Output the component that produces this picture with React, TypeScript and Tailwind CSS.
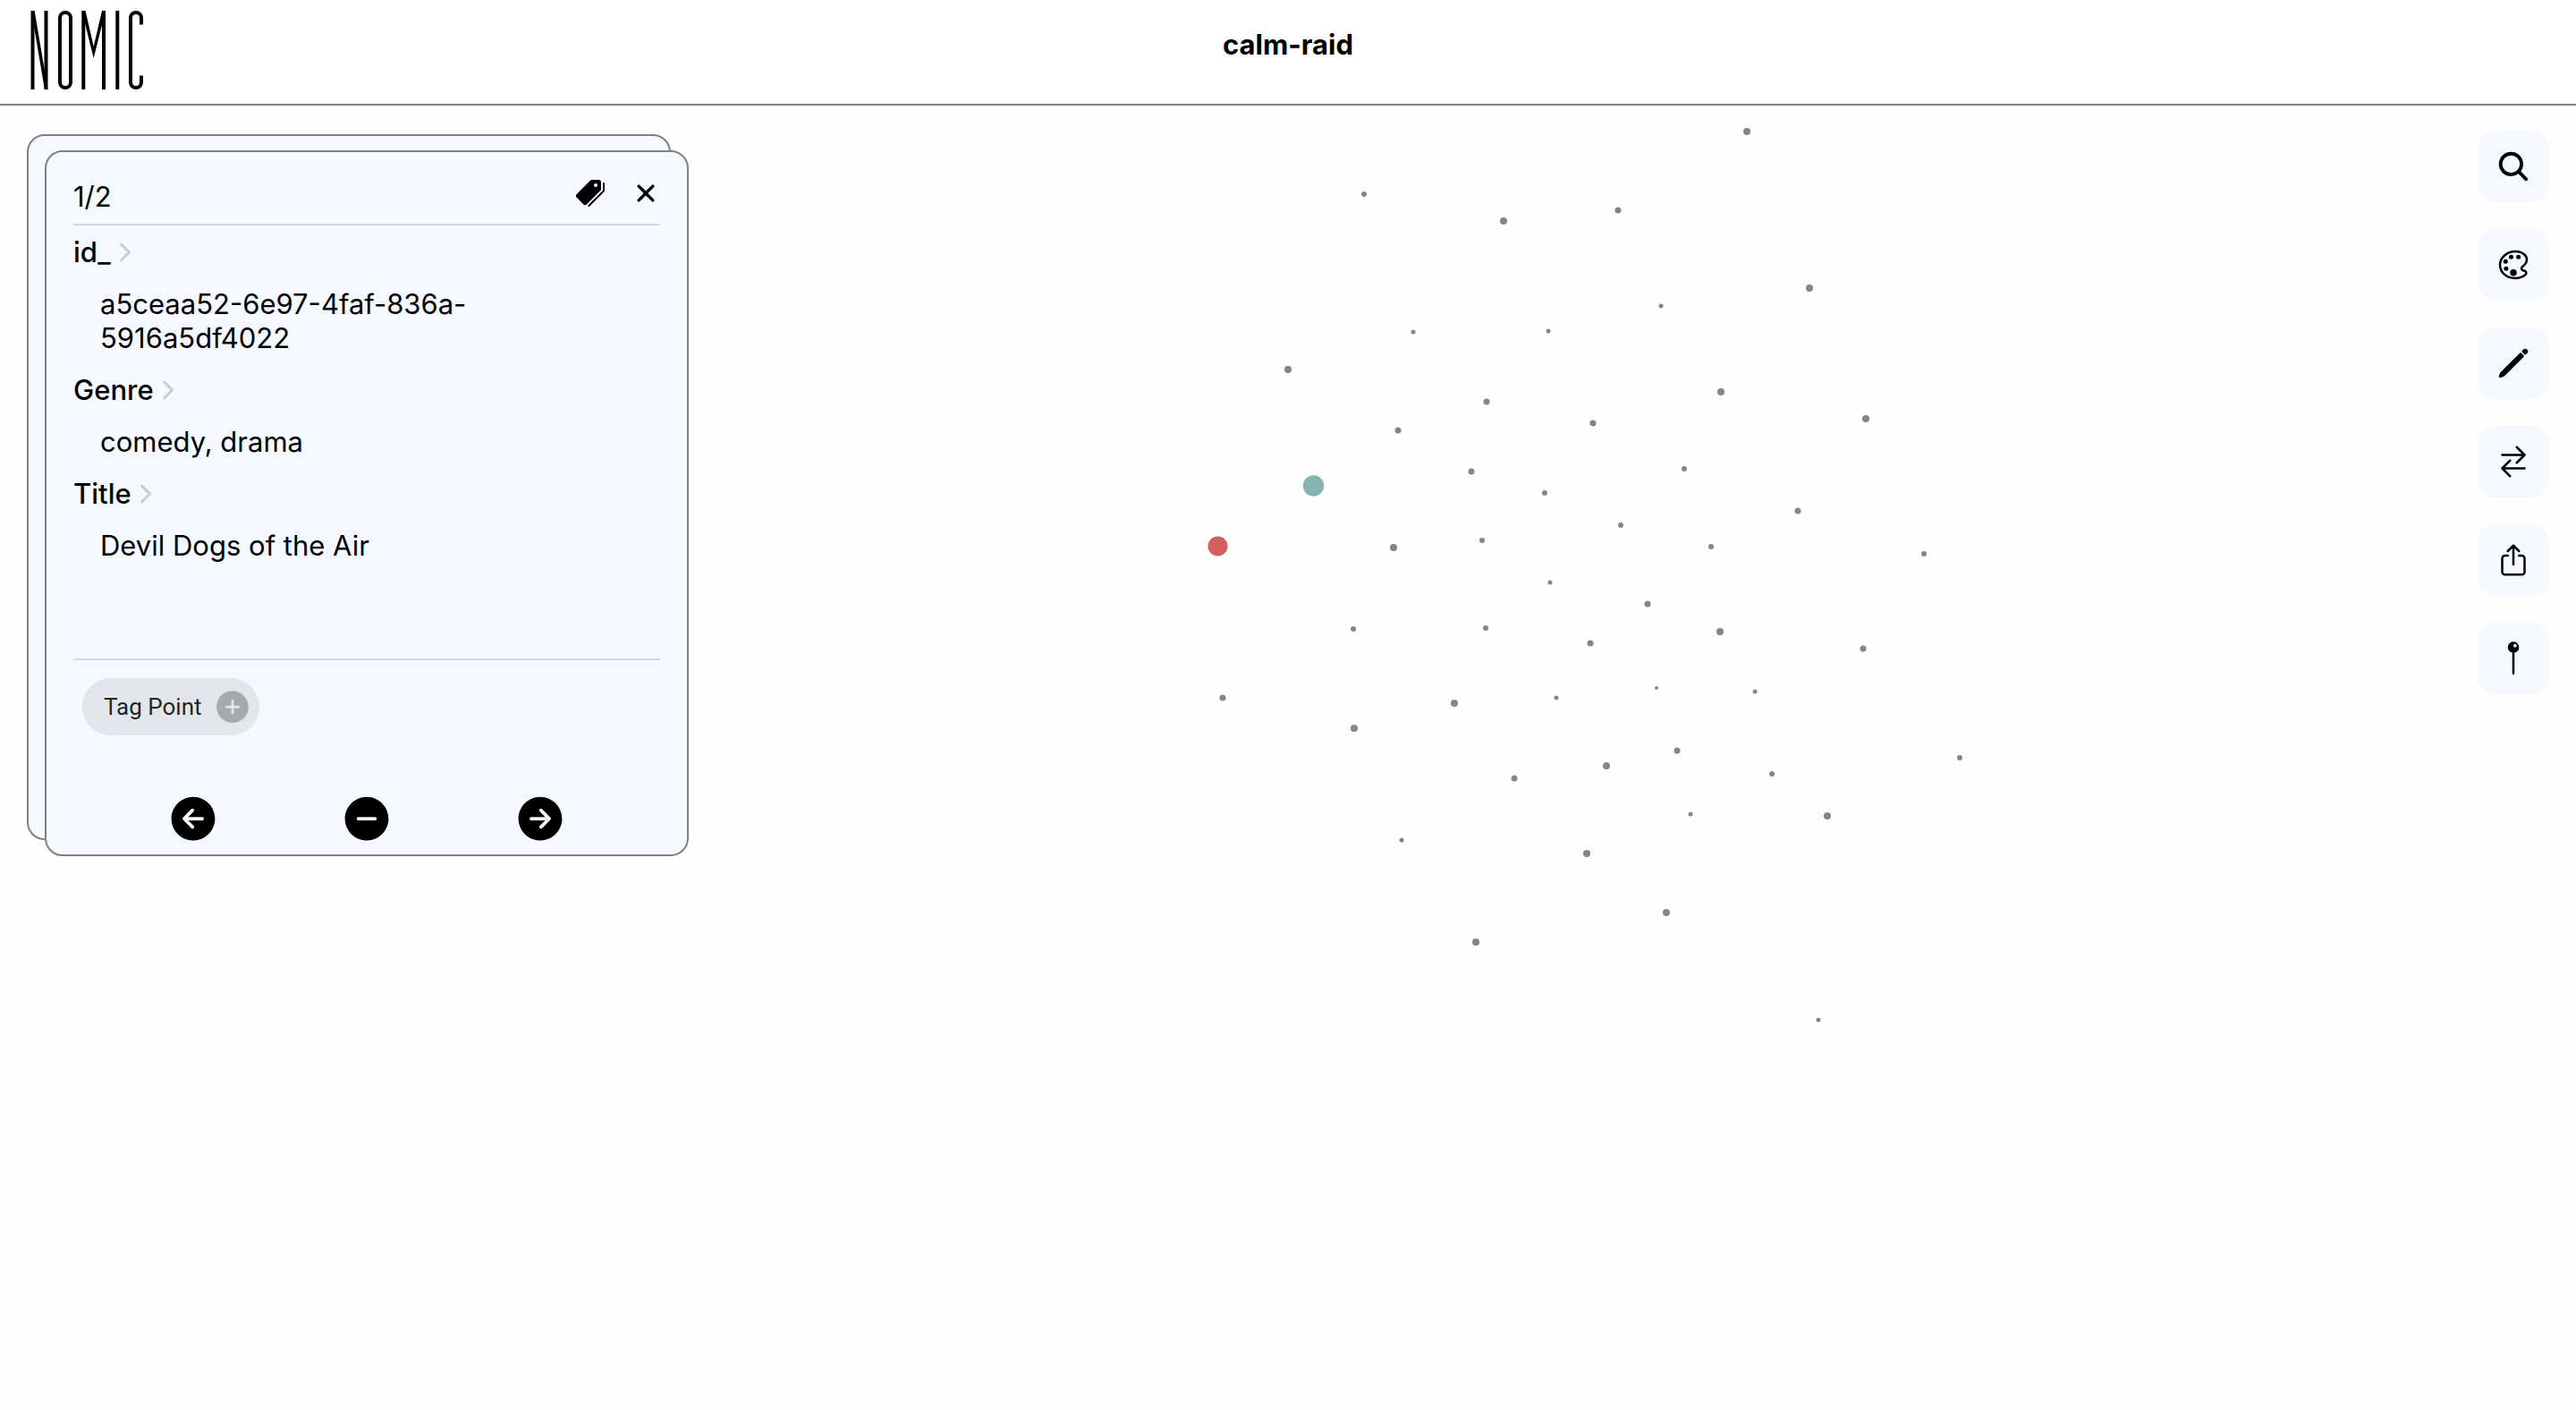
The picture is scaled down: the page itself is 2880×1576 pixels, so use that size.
import type { ReactNode } from "react";
import {
  IoAddCircle,
  IoArrowBackCircle,
  IoArrowForwardCircle,
  IoChevronForward,
  IoClose,
  IoColorPaletteOutline,
  IoPencil,
  IoPin,
  IoPricetags,
  IoRemoveCircle,
  IoSearch,
  IoShareOutline,
  IoSwapHorizontal,
} from "react-icons/io5";

type Point = [x: number, y: number, r: number];

const POINTS: Point[] = [
  [1525, 99, 3], [1681, 129, 4], [1580, 253, 2.5], [1731, 252, 2.5], [1440, 295, 4],
  [1662, 331, 3.5], [1563, 363, 3.5], [1781, 355, 3.5], [1645, 409, 3.5], [1727, 433, 3],
  [1558, 494, 4], [1657, 486, 3], [1953, 29, 4], [1809, 117, 3.5], [2023, 204, 4],
  [1857, 224, 2.5], [1924, 320, 4], [2086, 350, 4], [1883, 406, 3], [2010, 453, 3.5],
  [1812, 469, 3], [1913, 493, 3], [2151, 501, 3], [1733, 533, 2.5], [1513, 585, 3],
  [1661, 584, 3], [1778, 601, 3.5], [1367, 662, 3.5], [1626, 668, 4], [1740, 662, 2.5],
  [1514, 696, 4], [1796, 738, 4], [1693, 752, 3.5], [1567, 821, 2.5], [1774, 836, 4],
  [1650, 935, 4], [1842, 557, 3.5], [1923, 588, 4], [2083, 607, 3.5], [1852, 651, 2],
  [1962, 655, 2.5], [1875, 721, 3.5], [2191, 729, 3], [1981, 747, 3], [1890, 792, 2.5],
  [2043, 794, 4], [1863, 902, 4], [2033, 1022, 2.5],
];

const FIELDS = [
  { name: "id_", value: "a5ceaa52-6e97-4faf-836a-5916a5df4022" },
  { name: "Genre", value: "comedy, drama" },
  { name: "Title", value: "Devil Dogs of the Air" },
];

const TOOLS: { label: string; icon: ReactNode }[] = [
  { label: "Search", icon: <IoSearch size={40} /> },
  { label: "Color", icon: <IoColorPaletteOutline size={40} /> },
  { label: "Draw", icon: <IoPencil size={40} /> },
  { label: "Swap", icon: <IoSwapHorizontal size={40} /> },
  { label: "Share", icon: <IoShareOutline size={40} /> },
  { label: "Pin", icon: <IoPin size={40} /> },
];

function Logo() {
  return (
    <svg
      viewBox="0 0 128 88"
      className="h-[88px] w-32"
      fill="none"
      stroke="black"
      strokeWidth="4"
      role="img"
      aria-label="Nomic"
    >
      <path d="M2.5 0v88M17.5 0v88" />
      <path d="M1 0h3.6L19.5 88h-3.6Z" fill="black" stroke="none" />
      <rect x="33" y="2" width="12" height="84" rx="6" />
      <path d="M59.300 0v88M82 0v88" />
      <path d="M57.500 0h4L70.700 40 80 0h4L70.700 53Z" fill="black" stroke="none" />
      <path d="M97.300 0v88" />
      <path d="M124 15.500V8a6 6 0 0 0-12 0v72a6 6 0 0 0 12 0v-7.500" />
    </svg>
  );
}

function PointMap() {
  return (
    <svg
      className="absolute inset-0 h-full w-full"
      viewBox="0 0 2880 1458"
      role="img"
      aria-label="Point map"
    >
      {POINTS.map(([x, y, r]) => (
        <circle key={`${x}-${y}`} cx={x} cy={y} r={r} fill="#858585" />
      ))}
      <circle cx="1468.500" cy="425" r="11.700" fill="#85b4b2" />
      <circle cx="1361.500" cy="492.500" r="11" fill="#d15f5f" />
    </svg>
  );
}

function DetailCard() {
  return (
    <div className="relative mt-[50px] ml-[50px] w-[720px]">
      <div className="absolute right-5 bottom-[18px] -top-[18px] -left-5 rounded-[20px] border-2 border-[#808080] bg-[#f5f8ff]" />
      <section className="relative flex flex-col rounded-[20px] border-2 border-[#808080] bg-[#f5f8ff] px-[30px] pb-[10px]">
        <div className="flex h-[82px] items-center border-b-2 border-[#d5d8de]">
          <span className="mt-5 flex-1 text-[31px] leading-[38px]">1/2</span>
          <div className="mt-3 -mr-0.5 flex items-center gap-7">
            <button type="button" aria-label="Tags">
              <IoPricetags size={32} />
            </button>
            <button type="button" aria-label="Close">
              <IoClose size={36} />
            </button>
          </div>
        </div>
        <dl className="flex min-h-[484px] flex-col gap-5 pt-[11px] text-[31px] leading-[38px]">
          {FIELDS.map((field) => (
            <div key={field.name} className="flex flex-col gap-5">
              <dt className="flex items-center font-medium">
                {field.name}
                <IoChevronForward size={32} className="text-[#cccccc]" />
              </dt>
              <dd className="px-[30px]">{field.value}</dd>
            </div>
          ))}
        </dl>
        <div className="border-t-2 border-[#d5d8de] px-[10px] pt-5">
          <button
            type="button"
            className="flex h-16 items-center gap-3 rounded-full bg-[#e2e5ea] pr-2 pl-6 font-[Roboto,sans-serif] text-[26px] text-black/87"
          >
            Tag Point
            <IoAddCircle size={44} className="text-black/26" />
          </button>
        </div>
        <div className="mt-[63px] flex justify-center gap-[134px]">
          <button type="button" aria-label="Previous">
            <IoArrowBackCircle size={60} />
          </button>
          <button type="button" aria-label="Remove">
            <IoRemoveCircle size={60} />
          </button>
          <button type="button" aria-label="Next">
            <IoArrowForwardCircle size={60} />
          </button>
        </div>
      </section>
    </div>
  );
}

export default function App() {
  return (
    <div className="flex min-h-screen flex-col bg-white font-[Inter,sans-serif] text-black">
      <header className="grid grid-cols-3 items-start border-b-2 border-[#808080] px-[34px] pt-3 pb-4">
        <Logo />
        <h1 className="pt-[18px] text-center text-[31px] leading-10 font-bold">calm-raid</h1>
      </header>
      <main className="relative flex flex-1 items-start justify-between bg-[#fefefe]">
        <PointMap />
        <DetailCard />
        <nav className="relative flex flex-col gap-[30px] pt-7 pr-[30px]" aria-label="Map tools">
          {TOOLS.map((tool) => (
            <button
              key={tool.label}
              type="button"
              aria-label={tool.label}
              className="flex size-20 items-center justify-center rounded-[20px] bg-[#f5f8ff]"
            >
              {tool.icon}
            </button>
          ))}
        </nav>
      </main>
    </div>
  );
}
